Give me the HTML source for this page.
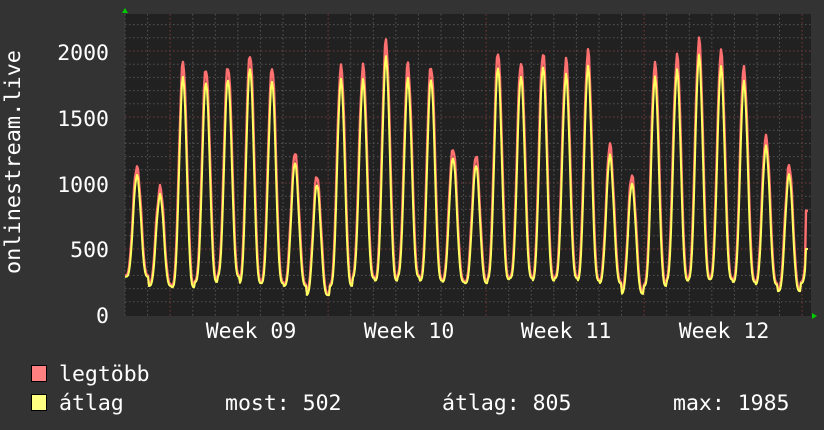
<!DOCTYPE html>
<html><head><meta charset="utf-8"><style>
html,body{margin:0;padding:0;background:#333;width:824px;height:430px;overflow:hidden}
svg text{font-family:"DejaVu Sans Mono","Liberation Mono",monospace;fill:#fff}
</style></head><body>
<svg id="s" width="824" height="430" xmlns="http://www.w3.org/2000/svg">
<rect width="824" height="430" fill="#333"/>
<rect x="125" y="14" width="686" height="302" fill="#212121"/>
<g id="grid"></g>
<polyline id="red" fill="none" stroke="#ff7070" stroke-width="2.4" stroke-linejoin="round"/>
<polyline id="yel" fill="none" stroke="#ffff60" stroke-width="2" stroke-linejoin="round"/>
<polygon points="122,13 128,13 125,8" fill="#0c0"/>
<polygon points="812,313 812,319 817,316" fill="#0c0"/>
<g font-size="21.5" text-anchor="end">
<text x="109" y="60">2000</text>
<text x="109" y="126">1500</text>
<text x="109" y="192">1000</text>
<text x="109" y="257">500</text>
<text x="109" y="323">0</text>
</g>
<g font-size="21.5" text-anchor="middle">
<text x="251" y="338">Week 09</text>
<text x="409" y="338">Week 10</text>
<text x="566" y="338">Week 11</text>
<text x="724" y="338">Week 12</text>
</g>
<text font-size="21.5" transform="translate(20,274) rotate(-90)" textLength="224" lengthAdjust="spacingAndGlyphs">onlinestream.live</text>
<rect x="31.5" y="365.5" width="15" height="16" fill="#ff8080" stroke="#000"/>
<rect x="31.5" y="394.5" width="15" height="16" fill="#ffff80" stroke="#000"/>
<g font-size="21.5">
<text x="59" y="381">legtöbb</text>
<text x="59" y="410">átlag</text>
<text x="225" y="410">most: 502</text>
<text x="442" y="410">átlag: 805</text>
<text x="673" y="410">max: 1985</text>
</g>
</svg>
<script>
(function(){
var ns="http://www.w3.org/2000/svg",g=document.getElementById('grid');
function ln(x1,y1,x2,y2,c){var l=document.createElementNS(ns,'line');l.setAttribute('x1',x1);l.setAttribute('y1',y1);l.setAttribute('x2',x2);l.setAttribute('y2',y2);l.setAttribute('stroke',c);l.setAttribute('stroke-dasharray','1.5,2.5');g.appendChild(l);}
for(var v=100;v<=2200;v+=100){var y=315-v*0.132;ln(125,y,811,y,v%500==0?'#7a3a3a':'#555');}
for(var i=0;i<31;i++){var x=125+i*22.57;if(x>811)break;var maj=((i-2)%7==0);ln(x,14,x,316,maj?'#7a3a3a':'#555');}
var pk=[[137,1130],[160,970],[183,1900],[206,1870],[228,1900],[250,1990],[272,1880],[295,1220],[317,1050],[341,1890],[363,1880],[386,2060],[408,1890],[431,1900],[453,1270],[476,1200],[498,1980],[521,1920],[543,2000],[566,1920],[588,1980],[610,1280],[632,1060],[655,1910],[677,1960],[699,2070],[721,1980],[744,1870],[766,1360],[789,1130],[812,1100]];
var tr=[300,230,220,260,300,250,250,230,160,230,290,270,300,270,260,250,280,290,270,290,270,250,170,230,270,280,280,260,240,190,250];
var r=[],yv=[];
for(var x=125;x<=808;x++){
 var k=0;while(k<pk.length-1&&Math.abs(pk[k+1][0]-x)<Math.abs(pk[k][0]-x))k++;
 var d=(x-pk[k][0])/22.57;var f=Math.pow(Math.cos(Math.PI*d),2);f=Math.pow(f,1.6);
 var base=tr[Math.min(k,tr.length-1)];
 var jit=Math.sin(x*1.7)*25+Math.sin(x*0.9)*20;
 var v=base+(pk[k][1]-base)*f+jit*f;
 var a=base+(pk[k][1]*0.95-base)*Math.pow(f,1.15)+jit*0.5*f-10;
 if(x>=806){v=790;a=500;}
 r.push(x+','+(315-v*0.132).toFixed(1));yv.push(x+','+(315-a*0.132).toFixed(1));
}
document.getElementById('red').setAttribute('points',r.join(' '));
document.getElementById('yel').setAttribute('points',yv.join(' '));
})();
</script>
</body></html>
